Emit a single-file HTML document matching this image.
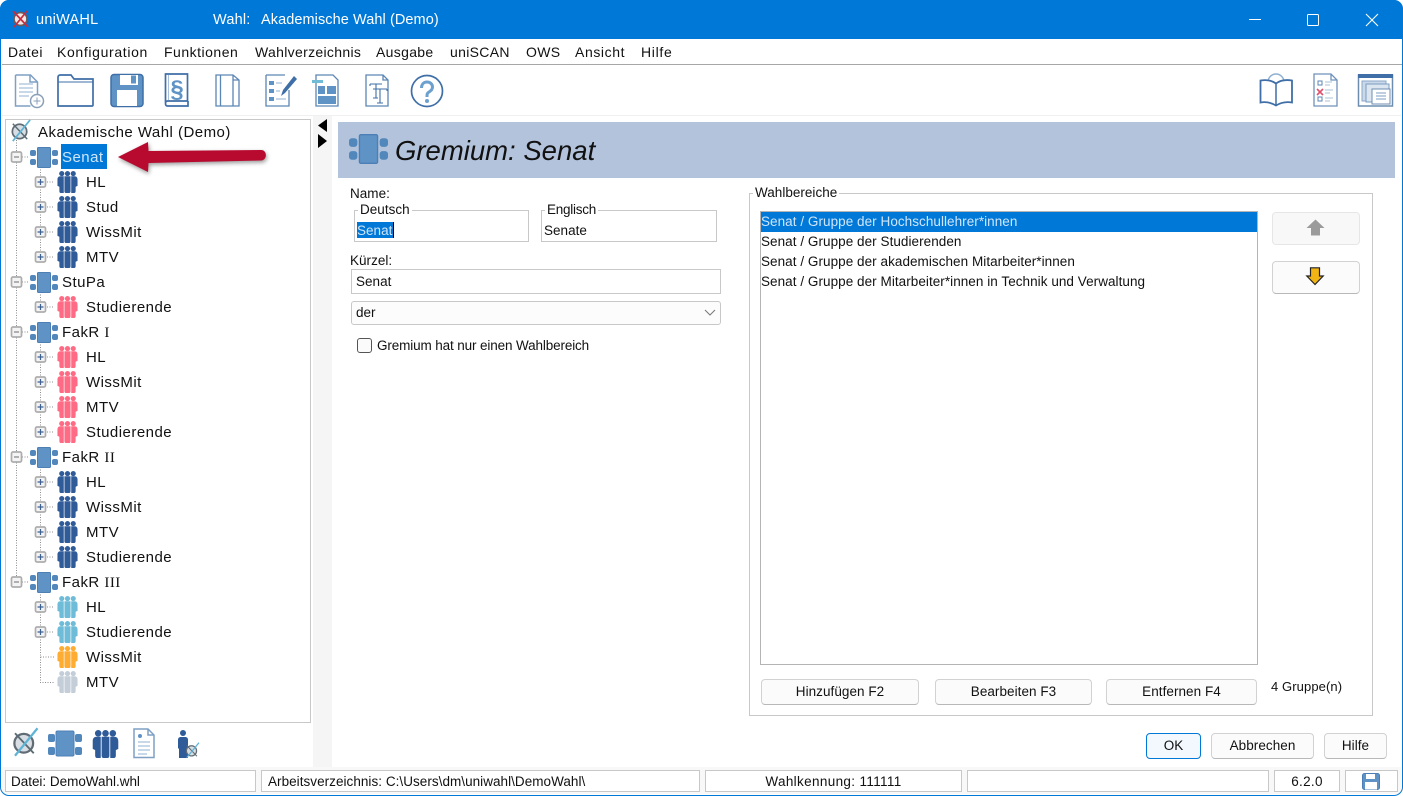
<!DOCTYPE html>
<html><head><meta charset="utf-8"><title>uniWAHL</title>
<style>
html,body{margin:0;padding:0;background:#fff;width:1403px;height:796px;overflow:hidden}
body{position:relative;font-family:"Liberation Sans",sans-serif;font-size:14px;color:#111}
.t{position:absolute;white-space:nowrap;line-height:20px;height:20px;letter-spacing:.32px}
.r{font-size:15px;letter-spacing:.47px;margin-top:1px}
.f{font-size:13.5px;letter-spacing:.02px}
.l{font-size:13.5px;letter-spacing:.05px}
.b{position:absolute;box-sizing:border-box}
.w{position:absolute;left:0;top:0;width:1403px;height:796px;overflow:hidden;border-radius:9px;background:#fff}
.g{position:absolute;box-sizing:border-box;border:1px solid #c8c8c8;background:#fff}
.btn{position:absolute;box-sizing:border-box;border:1px solid #d2d2d2;border-bottom-color:#b8b8b8;border-radius:4px;background:#fbfbfb;text-align:center;line-height:24px;letter-spacing:.05px;font-size:13.5px}
.s{position:absolute;box-sizing:border-box;border:1px solid #c8c8c8;background:#fff;top:770px;height:22px;line-height:21px;padding-left:5px;white-space:nowrap;letter-spacing:-.02px;font-size:13.5px}
svg{position:absolute;overflow:visible}
</style></head><body>
<svg width="0" height="0" style="position:absolute">
<defs>
<symbol id="gr" viewBox="0 0 28 21"><rect x="7.5" y=".5" width="13" height="20" rx="1" fill="#5f93c6" stroke="#4d7fb4"/><rect x="0" y="3" width="6" height="6" rx="2" fill="#5287bb"/><rect x="0" y="12" width="6" height="6" rx="2" fill="#5287bb"/><rect x="22" y="3" width="6" height="6" rx="2" fill="#5287bb"/><rect x="22" y="12" width="6" height="6" rx="2" fill="#5287bb"/></symbol>
<symbol id="pp" viewBox="0 0 21 23"><circle cx="4.500" cy="2.700" r="2.700" fill="currentColor"/><circle cx="10.500" cy="2.700" r="2.700" fill="currentColor"/><circle cx="16.500" cy="2.700" r="2.700" fill="currentColor"/><path d="M0 9c0-2 1-3.500 3-3.500h3.600V23H3.500c-1 0-1.500-1-1.500-2v-4.500l-2-1z" fill="currentColor"/><path d="M7.300 5.500h6.400V21c0 1-.5 2-1.500 2H8.800c-1 0-1.500-1-1.500-2z" fill="currentColor"/><path d="M14.400 5.500H18c2 0 3 1.500 3 3.500v6.500l-2 1V21c0 1-.5 2-1.500 2h-3.100z" fill="currentColor"/></symbol>
<symbol id="wa" viewBox="0 0 24 24"><circle cx="11" cy="13" r="7.500" fill="#d8dee3" stroke="#626c75" stroke-width="1.800"/><path d="M4 5l15 16" stroke="#5a6b74" stroke-width="1.500"/><path d="M22 1L4 23" stroke="#5fb4d6" stroke-width="1.800"/></symbol>
</defs>
</svg>
<div class="w">
<!-- title bar -->
<div class="b" style="left:0;top:0;width:1403px;height:39px;background:#0078d7"></div>
<svg style="left:12px;top:9px" width="18" height="20" viewBox="0 0 18 20"><circle cx="8.500" cy="10" r="6.500" fill="#efeae8" stroke="#6d5a5a" stroke-width="1.800"/><path d="M1 2l15 16M15 2L2 18" stroke="#c92a3e" stroke-width="1.700"/></svg>
<div class="t" style="left:36px;top:10px;color:#fff;letter-spacing:.25px;font-size:14.5px">uniWAHL</div>
<div class="t" style="left:213px;top:10px;color:#fff;letter-spacing:.2px;font-size:14.5px">Wahl:</div>
<div class="t" style="left:261px;top:10px;color:#fff;letter-spacing:.08px;font-size:14.5px">Akademische Wahl (Demo)</div>
<div class="b" style="left:1249px;top:19px;width:12px;height:1px;background:#fff"></div>
<div class="b" style="left:1307px;top:14px;width:12px;height:12px;border:1.2px solid #fff;border-radius:1.5px"></div>
<svg style="left:1366px;top:14px" width="12" height="12"><path d="M0 0l12 12M12 0L0 12" stroke="#fff" stroke-width="1.100"/></svg>
<!-- menu -->
<div class="b" style="left:2px;top:64px;width:1400px;height:1px;background:#a6a6a6"></div>
<div class="t" style="left:8px;top:42px;letter-spacing:.45px">Datei</div>
<div class="t" style="left:57px;top:42px;letter-spacing:.65px">Konfiguration</div>
<div class="t" style="left:164px;top:42px;letter-spacing:.5px">Funktionen</div>
<div class="t" style="left:255px;top:42px">Wahlverzeichnis</div>
<div class="t" style="left:376px;top:42px">Ausgabe</div>
<div class="t" style="left:450px;top:42px">uniSCAN</div>
<div class="t" style="left:526px;top:42px">OWS</div>
<div class="t" style="left:575px;top:42px;letter-spacing:.6px">Ansicht</div>
<div class="t" style="left:641px;top:42px;letter-spacing:.7px">Hilfe</div>
<!-- toolbar -->
<svg style="left:0;top:65px" width="460" height="50" fill="none" stroke="#3f6fa6" stroke-width="1.500">
<path d="M15.500 10h15l7 7v18M15.500 10v31h15" stroke="#7f9fc4"/><path d="M30 10v7h7" stroke="#7f9fc4"/><path d="M19 19h14M19 23h14M19 27h14M19 31h10" stroke="#a9c0da" stroke-width="1.200"/><circle cx="37" cy="36" r="6.500" fill="#fff" stroke="#8aa0b8"/><path d="M33.500 36h7M37 32.500v7" stroke="#8aa0b8" stroke-width="1"/>
<path d="M58 41V12c0-1 1-2 2-2h11l3 4h19v26c0 1-1 1-1 1H58z" stroke-width="1.700"/><path d="M58 17h35" stroke-width="1"/>
<rect x="111" y="9.500" width="32" height="32" rx="3" fill="#5f93c6" stroke="#3f6fa6"/><rect x="120" y="10" width="18" height="10" fill="#fff" stroke="none"/><rect x="131" y="10.500" width="5" height="8" fill="#5f93c6" stroke="none"/><rect x="117" y="25" width="20" height="16" fill="#fff" stroke="none"/>
<path d="M165.500 38V9h22v27h-20c-1 0-2 .5-2 2.500s1 2.500 2 2.500h20.500v-5" stroke-width="1.700"/><path d="M168.500 10v25" stroke="#a9c0da" stroke-width="1"/>
<text x="177" y="32" text-anchor="middle" font-family="Liberation Sans,sans-serif" font-size="24" font-weight="700" fill="#5f93c6" stroke="none">§</text>
<path d="M216 10h17l6 5v26h-23zM220.500 10v31M233 10v5h6M233 15v26" stroke="#5c86b4" stroke-width="1.300"/>
<path d="M266 10h19M266 10v31h23V25" stroke="#5c86b4" stroke-width="1.300"/><path d="M269 16h5v4h-5zM269 24h5v4h-5zM269 32h5v4h-5z" fill="#5f93c6" stroke="none"/><path d="M276 18h6M276 26h4M276 34h10" stroke="#a9c0da" stroke-width="1.200"/><path d="M281 31l2-6 11-14 3 3-12 14z" fill="#3f6fa6" stroke="none"/>
<path d="M316 10h17l5 5v26h-22z" stroke="#5c86b4" stroke-width="1.300"/><rect x="312" y="15" width="11" height="3" fill="#70bcd6" stroke="none"/><path d="M318 21h7v8h-7zM327 21h9v8h-9zM318 31h18v8h-18z" fill="#5f93c6" stroke="none"/>
<path d="M366 10h17l5 5v26h-22zM383 10v5h5" stroke="#5c86b4" stroke-width="1.300"/><path d="M370 19h12M370 19v2M376 19v14M373 33h5M373 24h14M380 24v2M387 24v2M380 24v14M377 38h6" stroke="#3f6fa6" stroke-width="1.100"/>
<circle cx="427" cy="26" r="15.500" stroke-width="1.700"/>
<path d="M421.500 23c0-4 2.500-6 5.500-6s5.500 2 5.500 5-2 4-3.500 5c-2 1.200-2 2-2 5" stroke="#6ca0cf" stroke-width="3"/><circle cx="427" cy="36" r="2" fill="#6ca0cf" stroke="none"/>
</svg>
<svg style="left:1250px;top:65px" width="150" height="50" fill="none" stroke="#3f6fa6" stroke-width="1.500">
<circle cx="26" cy="17" r="8" stroke="#8fb0d0"/><path d="M10.500 15.500c6-1 11.500 0 15.500 3 4-3 10-4 16-3v22c-6-1-11 0-16 3-5-3-10-4-15.500-3z" fill="#fff" stroke-width="1.800"/><path d="M26 18.500v22" stroke-width="1.500"/>
<path d="M64 9h17l6 6v26H64zM81 9v6h6" stroke="#6f92ba" stroke-width="1.300"/><path d="M68 16h4v4h-4zM68 32h4v4h-4z" stroke="#5c86b4" stroke-width="1"/><path d="M67 24l6 6M73 24l-6 6" stroke="#e0506f" stroke-width="1.600"/><path d="M75 17h7M75 20h5M75 25h8M75 28h5M75 33h8M75 36h5" stroke="#a9c0da" stroke-width="1"/>
<rect x="108.500" y="10" width="34" height="31" stroke="#6c8db0" fill="#fff"/><rect x="108" y="9" width="35" height="4" fill="#3f6fa6" stroke="none"/><rect x="112" y="16" width="24" height="20" fill="#c9d9ea" stroke="#8aa8c8" stroke-width="1"/><rect x="116" y="19" width="23" height="18" fill="#dbe6f1" stroke="#7b9cc0" stroke-width="1"/><rect x="122" y="24" width="18" height="15" fill="#fff" stroke="#6c8db0" stroke-width="1"/><path d="M126 28h10M126 31h10M126 34h10" stroke="#7b9cc0" stroke-width="1"/>
</svg>
<div class="b" style="left:2px;top:115px;width:1399px;height:1px;background:#f0f0f0"></div>
<!-- left and splitter backgrounds -->
<div class="b" style="left:313px;top:116px;width:19px;height:651px;background:#f5f5f5"></div>
<div class="b" style="left:2px;top:767px;width:1399px;height:27px;background:#f8f8f8"></div>
<svg style="left:318px;top:118px" width="10" height="32"><path d="M9 1v13L0 7.500zM0 16v14l9-7z" fill="#000"/></svg>
<!-- tree -->
<div class="g" style="left:5px;top:119px;width:306px;height:604px"></div>
<svg style="left:0;top:0" width="320" height="720" fill="none">
<g stroke="#8e8e8e" stroke-dasharray="1 1.500" stroke-width="1">
<path d="M16.500 140V582M22 157h7M22 282h7M22 332h7M22 457h7M22 582h7"/>
<path d="M40.500 167V257M40.500 292V307M40.500 342V432M40.500 467V557M40.500 592V682.500H54M40.500 657H54"/>
<path d="M47 182h7M47 207h7M47 232h7M47 257h7M47 307h7M47 357h7M47 382h7M47 407h7M47 432h7M47 482h7M47 507h7M47 532h7M47 557h7M47 607h7M47 632h7"/>
</g>
<g fill="#f4f4f4" stroke="#adadad" stroke-width="1.700">
<rect x="11.500" y="152" width="10" height="10" rx="1.500"/><rect x="11.500" y="277" width="10" height="10" rx="1.500"/><rect x="11.500" y="327" width="10" height="10" rx="1.500"/><rect x="11.500" y="452" width="10" height="10" rx="1.500"/><rect x="11.500" y="577" width="10" height="10" rx="1.500"/>
<rect x="35.500" y="177" width="10" height="10" rx="1.500"/><rect x="35.500" y="202" width="10" height="10" rx="1.500"/><rect x="35.500" y="227" width="10" height="10" rx="1.500"/><rect x="35.500" y="252" width="10" height="10" rx="1.500"/><rect x="35.500" y="302" width="10" height="10" rx="1.500"/><rect x="35.500" y="352" width="10" height="10" rx="1.500"/><rect x="35.500" y="377" width="10" height="10" rx="1.500"/><rect x="35.500" y="402" width="10" height="10" rx="1.500"/><rect x="35.500" y="427" width="10" height="10" rx="1.500"/><rect x="35.500" y="477" width="10" height="10" rx="1.500"/><rect x="35.500" y="502" width="10" height="10" rx="1.500"/><rect x="35.500" y="527" width="10" height="10" rx="1.500"/><rect x="35.500" y="552" width="10" height="10" rx="1.500"/><rect x="35.500" y="602" width="10" height="10" rx="1.500"/><rect x="35.500" y="627" width="10" height="10" rx="1.500"/>
</g>
<path d="M14 157h5M14 282h5M14 332h5M14 457h5M14 582h5" stroke="#888" stroke-width="1.300"/>
<path d="M37.500 182h6M40.500 179v6M37.500 207h6M40.500 204v6M37.500 232h6M40.500 229v6M37.500 257h6M40.500 254v6M37.500 307h6M40.500 304v6M37.500 357h6M40.500 354v6M37.500 382h6M40.500 379v6M37.500 407h6M40.500 404v6M37.500 432h6M40.500 429v6M37.500 482h6M40.500 479v6M37.500 507h6M40.500 504v6M37.500 532h6M40.500 529v6M37.500 557h6M40.500 554v6M37.500 607h6M40.500 604v6M37.500 632h6M40.500 629v6" stroke="#3c5f94" stroke-width="1.200"/>
<use href="#wa" x="9" y="119" width="23" height="23"/>
<use href="#gr" x="30" y="147" width="28" height="21"/>
<use href="#gr" x="30" y="272" width="28" height="21"/>
<use href="#gr" x="30" y="322" width="28" height="21"/>
<use href="#gr" x="30" y="447" width="28" height="21"/>
<use href="#gr" x="30" y="572" width="28" height="21"/>
<g color="#2f5b98"><use href="#pp" x="57" y="171" width="21" height="22"/><use href="#pp" x="57" y="196" width="21" height="22"/><use href="#pp" x="57" y="221" width="21" height="22"/><use href="#pp" x="57" y="246" width="21" height="22"/>
<use href="#pp" x="57" y="471" width="21" height="22"/><use href="#pp" x="57" y="496" width="21" height="22"/><use href="#pp" x="57" y="521" width="21" height="22"/><use href="#pp" x="57" y="546" width="21" height="22"/></g>
<g color="#ff6b84"><use href="#pp" x="57" y="296" width="21" height="22"/><use href="#pp" x="57" y="346" width="21" height="22"/><use href="#pp" x="57" y="371" width="21" height="22"/><use href="#pp" x="57" y="396" width="21" height="22"/><use href="#pp" x="57" y="421" width="21" height="22"/></g>
<g color="#6fbcd8"><use href="#pp" x="57" y="596" width="21" height="22"/><use href="#pp" x="57" y="621" width="21" height="22"/></g>
<use href="#pp" x="57" y="646" width="21" height="22" color="#ffac33"/>
<use href="#pp" x="57" y="671" width="21" height="22" color="#c3ced8"/>
</svg>
<div class="t r" style="left:38px;top:122px">Akademische Wahl (Demo)</div>
<div class="b" style="left:61px;top:144px;width:46px;height:25px;background:#0078d7"></div>
<div class="t r" style="left:62px;top:147px;color:#cfe6fa">Senat</div>
<div class="t r" style="left:62px;top:272px">StuPa</div>
<div class="t r" style="left:62px;top:322px">FakR <span style="font-family:'Liberation Serif',serif">I</span></div>
<div class="t r" style="left:62px;top:447px">FakR <span style="font-family:'Liberation Serif',serif">II</span></div>
<div class="t r" style="left:62px;top:572px">FakR <span style="font-family:'Liberation Serif',serif">III</span></div>
<div class="t r" style="left:86px;top:172px">HL</div>
<div class="t r" style="left:86px;top:197px">Stud</div>
<div class="t r" style="left:86px;top:222px">WissMit</div>
<div class="t r" style="left:86px;top:247px">MTV</div>
<div class="t r" style="left:86px;top:297px">Studierende</div>
<div class="t r" style="left:86px;top:347px">HL</div>
<div class="t r" style="left:86px;top:372px">WissMit</div>
<div class="t r" style="left:86px;top:397px">MTV</div>
<div class="t r" style="left:86px;top:422px">Studierende</div>
<div class="t r" style="left:86px;top:472px">HL</div>
<div class="t r" style="left:86px;top:497px">WissMit</div>
<div class="t r" style="left:86px;top:522px">MTV</div>
<div class="t r" style="left:86px;top:547px">Studierende</div>
<div class="t r" style="left:86px;top:597px">HL</div>
<div class="t r" style="left:86px;top:622px">Studierende</div>
<div class="t r" style="left:86px;top:647px">WissMit</div>
<div class="t r" style="left:86px;top:672px">MTV</div>
<!-- arrow -->
<svg style="left:110px;top:135px" width="170" height="45"><path d="M8 22L38 7l.5 9L151 15c6.500 0 6.500 10 0 10.500L38.500 28 38 37z" fill="#b8092f" style="filter:drop-shadow(1px 2px 2px rgba(0,0,0,.4))"/></svg>
<!-- bottom-left icons -->
<svg style="left:0;top:725px" width="210" height="40">
<use href="#wa" x="10" y="2" width="30" height="30"/>
<rect x="56" y="6" width="18" height="25" rx="1.500" fill="#5f93c6" stroke="#4d7fb4"/><rect x="48" y="9" width="7" height="8" rx="2" fill="#5287bb"/><rect x="48" y="22" width="7" height="8" rx="2" fill="#5287bb"/><rect x="75" y="9" width="7" height="8" rx="2" fill="#5287bb"/><rect x="75" y="22" width="7" height="8" rx="2" fill="#5287bb"/>
<use href="#pp" x="92.500" y="5" width="26" height="28" color="#2f5b98"/>
<path d="M134 4h14l6 6v22.500h-20zM148 4v6h6" fill="#fff" stroke="#7f9fc4" stroke-width="1.500"/><circle cx="140" cy="11" r="2" fill="#5f93c6"/><path d="M138 17h12M138 21h12M138 25h12M138 29h9" stroke="#8fb0d0" stroke-width="1.100"/>
<circle cx="183" cy="8" r="3" fill="#2f5b98"/><path d="M178 15c0-2 1-3 3-3h4c2 0 3 1 3 3v18h-9v-9l-1-1z" fill="#2f5b98"/>
<g transform="translate(184 17) scale(.68)"><use href="#wa" x="0" y="0" width="24" height="24"/></g>
</svg>
<!-- header -->
<div class="b" style="left:338px;top:122px;width:1057px;height:56px;background:#b3c3dc"></div>
<svg style="left:349px;top:134px" width="39" height="30" viewBox="0 0 28 21" preserveAspectRatio="none"><use href="#gr" width="28" height="21"/></svg>
<div class="t" style="left:395px;top:134px;height:33px;line-height:33px;font-size:27.5px;font-style:italic;letter-spacing:0;color:#111">Gremium: Senat</div>
<!-- form -->
<div class="t f" style="left:350px;top:184px">Name:</div>
<div class="g" style="left:354px;top:210px;width:175px;height:32px"></div>
<div class="t f" style="left:358px;top:201px;background:#fff;padding:0 2px;height:16px;line-height:18px">Deutsch</div>
<div class="b" style="left:357px;top:222px;width:36px;height:16px;background:#0078d7"></div>
<div class="t f" style="left:357px;top:221px;color:#cfe6fa">Senat</div>
<div class="b" style="left:392.5px;top:222px;width:1px;height:16px;background:#000"></div>
<div class="g" style="left:541px;top:210px;width:176px;height:32px"></div>
<div class="t f" style="left:545px;top:201px;background:#fff;padding:0 2px;height:16px;line-height:18px;letter-spacing:-.25px">Englisch</div>
<div class="t f" style="left:544px;top:221px">Senate</div>
<div class="t f" style="left:350px;top:251px">Kürzel:</div>
<div class="g" style="left:351px;top:269px;width:370px;height:25px"></div>
<div class="t f" style="left:356px;top:272px">Senat</div>
<div class="g" style="left:351px;top:301px;width:370px;height:24px;background:#fcfcfc;border-radius:3px"></div>
<div class="t f" style="left:356px;top:303px">der</div>
<svg style="left:704px;top:309px" width="12" height="8"><path d="M1 1l5 5 5-5" fill="none" stroke="#7a7a7a" stroke-width="1.100"/></svg>
<div class="b" style="left:357px;top:338px;width:15px;height:15px;border:1px solid #555;border-radius:3px;background:#fbfbfb"></div>
<div class="t f" style="left:377px;top:336px;letter-spacing:-.13px">Gremium hat nur einen Wahlbereich</div>
<!-- Wahlbereiche -->
<div class="g" style="left:749px;top:193px;width:624px;height:523px"></div>
<div class="t f" style="left:753px;top:183px;background:#fff;padding:0 2px;height:18px">Wahlbereiche</div>
<div class="g" style="left:760px;top:211px;width:498px;height:454px;border-color:#b4b4b4"></div>
<div class="b" style="left:761px;top:212px;width:496px;height:20px;background:#0078d7"></div>
<div class="t l" style="left:761px;top:212px;color:#cfe6fa">Senat / Gruppe der Hochschullehrer*innen</div>
<div class="t l" style="left:761px;top:232px">Senat / Gruppe der Studierenden</div>
<div class="t l" style="left:761px;top:252px">Senat / Gruppe der akademischen Mitarbeiter*innen</div>
<div class="t l" style="left:761px;top:272px">Senat / Gruppe der Mitarbeiter*innen in Technik und Verwaltung</div>
<div class="btn" style="left:1272px;top:212px;width:88px;height:33px;background:#f8f8f8;border-color:#e6e6e6"></div>
<svg style="left:1306px;top:219px" width="19" height="17"><path d="M9.500 .5L18.500 9h-4.500v7.500H5V9H.5z" fill="#9b9b9b"/></svg>
<div class="btn" style="left:1272px;top:261px;width:88px;height:33px"></div>
<svg style="left:1306px;top:267px" width="18" height="18"><path d="M9 17.500L.8 9h3.700V.8h9V9h3.700z" fill="#f0b414" stroke="#222" stroke-width="1.200"/></svg>
<div class="btn" style="left:761px;top:679px;width:158px;height:26px">Hinzufügen F2</div>
<div class="btn" style="left:935px;top:679px;width:157px;height:26px">Bearbeiten F3</div>
<div class="btn" style="left:1106px;top:679px;width:151px;height:26px">Entfernen F4</div>
<div class="t" style="left:1271px;top:677px;font-size:13px;letter-spacing:.1px">4 Gruppe(n)</div>
<div class="btn" style="left:1146px;top:733px;width:55px;height:26px;border:1.5px solid #0078d7;background:#f2f8fd;line-height:23px">OK</div>
<div class="btn" style="left:1211px;top:733px;width:103px;height:26px;line-height:23px">Abbrechen</div>
<div class="btn" style="left:1324px;top:733px;width:63px;height:26px;line-height:23px">Hilfe</div>
<!-- status bar -->
<div class="s" style="left:5px;width:251px">Datei: DemoWahl.whl</div>
<div class="s" style="left:261px;width:439px;padding-left:6px;letter-spacing:.04px">Arbeitsverzeichnis: C:\Users\dm\uniwahl\DemoWahl\</div>
<div class="s" style="left:705px;width:257px;text-align:center;padding-left:0;letter-spacing:.35px">Wahlkennung: 111111</div>
<div class="s" style="left:967px;width:302px"></div>
<div class="s" style="left:1274px;width:66px;text-align:center;padding-left:0;letter-spacing:.3px">6.2.0</div>
<div class="s" style="left:1345px;width:53px"></div>
<svg style="left:1362px;top:773px" width="18" height="17"><rect x=".5" y=".5" width="17" height="16" rx="2" fill="#5f93c6" stroke="#4d7fb4"/><rect x="4" y="1" width="9" height="5" fill="#fff"/><rect x="3" y="9" width="12" height="7.500" fill="#fff"/></svg>
</div>
<!-- window edge -->
<div class="b" style="left:0;top:0;width:1403px;height:796px;border:1.5px solid #0078d7;border-radius:9px"></div>
</body></html>
